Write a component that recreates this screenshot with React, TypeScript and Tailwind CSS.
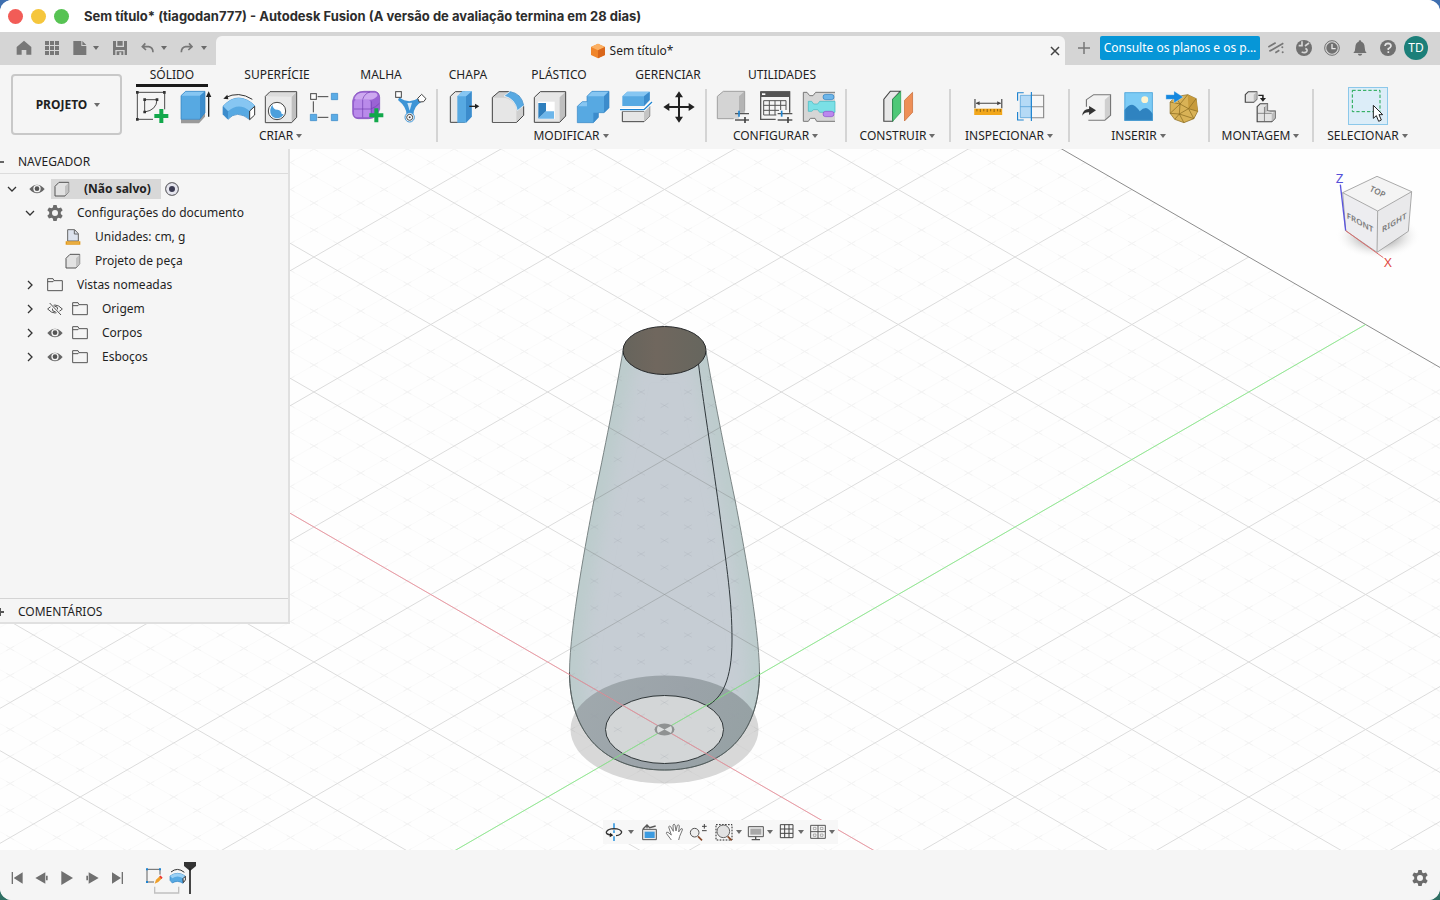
import type { ReactNode } from "react";

type IconProps = { box: string; size?: string; fill?: boolean; children: ReactNode };

function Icon({ box, size = "size-9", fill = false, children }: IconProps) {
  return (
    <svg
      viewBox={box}
      preserveAspectRatio={fill ? "none" : undefined}
      className={`${size} block shrink-0`}
      fill="none"
      aria-hidden="true"
    >
      {children}
    </svg>
  );
}

function Caret({ className = "" }: { className?: string }) {
  return (
    <svg viewBox="0 0 8 6" className={`h-1.5 w-2 shrink-0 ${className}`} aria-hidden="true">
      <path d="M1 1h6L4 5z" fill="#6b6b6b" />
    </svg>
  );
}

const plus = (x: number, y: number) => (
  <path d={`M${x - 6} ${y - 21}h12v15h15v12h-15v15h-12v-15h-15v-12h15z`} fill="#12a84b" />
);

const createTools: [string, ReactNode][] = [
  ["Criar esboço", (
    <Icon box="405 267 108 108">
      <path d="M415 277H497V328M415 277V358H462" stroke="#4a4a4a" strokeWidth="3" />
      <path d="M437 299H474M437 299V336M474 299Q473 330 437 336" stroke="#4a4a4a" strokeWidth="3" />
      <path d="M411 273h8v8h-8zM492 273h8v8h-8zM411 354h8v8h-8zM433 295h8v8h-8zM470 295h8v8h-8zM433 332h8v8h-8z" fill="#333" />
      {plus(487, 348)}
    </Icon>
  )],
  ["Extrusão", (
    <Icon box="531 267 108 108">
      <path d="M543 358h54l18-22v14l-18 20h-54z" fill="#9a9a9a" />
      <path d="M543 287l14-13h58v64l-16 20h-56z" fill="#57a9e2" />
      <path d="M543 287l14-13h58l-15 13z" fill="#86c6f2" />
      <path d="M600 287l15-13v64l-15 20z" fill="#3c8ccc" />
      <path d="M543 287l14-13h58v64l-16 20h-56z" stroke="#2f7fbd" strokeWidth="2" />
      <path d="M626 286V350" stroke="#222" strokeWidth="4" />
      <path d="M618 291l8-17 8 17z" fill="#222" />
    </Icon>
  )],
  ["Revolução", (
    <Icon box="660 267 108 108">
      <path d="M676 293Q716 272 757 298" stroke="#333" strokeWidth="3" />
      <path d="M670 296l12-12 3 14z" fill="#222" />
      <path d="M669 319Q692 294 716 294Q743 295 765 318L749 334V359Q732 344 713 343Q696 344 684 358L669 343Z" fill="#57a9e2" stroke="#3585c4" strokeWidth="2" />
      <path d="M669 319Q692 294 716 294Q743 295 765 318L749 333Q716 306 684 334Z" fill="#86c6f2" />
      <path d="M669 319L684 334V358L669 343Z" fill="#3c8ccc" />
      <path d="M749 333L764 319V345L749 359Z" fill="#fff" stroke="#333" strokeWidth="3" />
    </Icon>
  )],
  ["Furo", (
    <Icon box="792 267 108 108">
      <path d="M799 289L813 275H893V352L878 368H799Z" fill="#e9e9e9" />
      <path d="M878 290L893 275V352L878 368Z" fill="#bfbfbf" />
      <path d="M799 289L813 275H893L878 290Z" fill="#dcdcdc" />
      <path d="M799 289L813 275H893V352L878 368H799Z" stroke="#4a4a4a" strokeWidth="3" />
      <circle cx="834" cy="333" r="26" fill="#fff" stroke="#444" strokeWidth="3" />
      <path d="M820 314Q823 330 836 329Q846 330 848 342L854 343A22 22 0 0 1 818 347Q808 330 820 314Z" fill="#4b9fdc" />
    </Icon>
  )],
  ["Padrão retangular", (
    <Icon box="915 267 108 108">
      <path d="M950 290H982M937 304V337M950 352H982" stroke="#444" strokeWidth="3" />
      <rect x="929" y="281" width="17" height="17" fill="#fff" stroke="#444" strokeWidth="3" />
      <path d="M991 280h19v19h-19zM928 343h19v19h-19zM991 343h19v19h-19z" fill="#5aace6" stroke="#3585c4" strokeWidth="2" />
    </Icon>
  )],
  ["Criar forma", (
    <Icon box="1047 267 108 108">
      <path d="M1058 302Q1060 288 1070 280Q1078 274 1092 274H1124Q1138 276 1139 292V328Q1130 356 1106 356H1074Q1058 354 1058 338Z" fill="#9a63d4" stroke="#7a45b5" strokeWidth="2" />
      <path d="M1064 294Q1070 278 1090 278H1124Q1134 279 1132 288Q1122 300 1108 299H1068Q1062 298 1064 294Z" fill="#cda9f0" />
      <rect x="1062" y="299" width="50" height="52" rx="10" fill="#b98aea" />
      <path d="M1088 299V352M1062 327H1112Q1128 322 1138 310M1088 298Q1094 280 1110 276M1114 304V348" stroke="#6f3db0" strokeWidth="2" />
      {plus(1129, 346)}
    </Icon>
  )],
  ["Modelagem automatizada", (
    <Icon box="1176 267 108 108">
      <path d="M1198 292Q1226 314 1256 294L1264 306Q1241 318 1240 346L1220 346Q1221 322 1194 300Z" fill="#3c94d6" />
      <path d="M1222 309l14-1-7 24z" fill="#cfe6f7" />
      <rect x="1187" y="275" width="17" height="17" fill="#fff" stroke="#444" strokeWidth="3" />
      <path d="M1265 283l13 13-7 9-13 1-5-11z" fill="#fff" stroke="#444" strokeWidth="3" />
      <circle cx="1229" cy="352" r="14" fill="#fff" stroke="#3c94d6" strokeWidth="3" />
      <circle cx="1229" cy="352" r="9" stroke="#444" strokeWidth="3" />
      <circle cx="1229" cy="352" r="3" fill="#444" />
    </Icon>
  )],
];

const modifyTools: [string, ReactNode][] = [
  ["Pressionar/puxar", (
    <Icon box="48 87 108 108">
      <path d="M61 109L76 95H104V187H61Z" fill="#e8e8e8" stroke="#444" strokeWidth="3" />
      <path d="M82 109L97 94H125V170L108 188H82Z" fill="#57a9e2" />
      <path d="M108 109L125 94V170L108 188Z" fill="#3c8ccc" />
      <path d="M82 109L97 94H125L108 109Z" fill="#86c6f2" />
      <path d="M118 139H138" stroke="#222" strokeWidth="4" />
      <path d="M135 131l13 8-13 8z" fill="#222" />
    </Icon>
  )],
  ["Arredondamento", (
    <Icon box="177 87 108 108">
      <path d="M187 112L207 95H236Q272 104 281 140V166L260 187H187Z" fill="#cfcfcf" stroke="#444" strokeWidth="3" />
      <path d="M189 113H224Q256 120 259 152V186H189Z" fill="#e6e6e6" />
      <path d="M222 108L240 94Q274 100 282 136L262 152Q256 116 222 108Z" fill="#57a9e2" stroke="#fff" strokeWidth="2" />
      <path d="M240 95Q274 100 281 136" stroke="#2f7fbd" strokeWidth="2" />
    </Icon>
  )],
  ["Casca", (
    <Icon box="309 87 108 108">
      <path d="M316 112L334 95H410V168L392 187H316Z" fill="#e6e6e6" />
      <path d="M392 112L410 95V168L392 187Z" fill="#bfbfbf" />
      <path d="M316 112L334 95H410V168L392 187H316Z" stroke="#444" strokeWidth="3" />
      <rect x="327" y="125" width="50" height="52" fill="#fff" />
      <path d="M328 129H351V154L328 176Z" fill="#2f7fbd" />
      <path d="M328 176L351 154H375V176Z" fill="#6db6ea" />
    </Icon>
  )],
  ["Combinar", (
    <Icon box="438 87 108 108">
      <path d="M445 139L460 125H474V109L489 94H540V143L525 158H508V172L493 188H445Z" fill="#57a9e2" />
      <path d="M445 139L460 125H474V139ZM474 109L489 94H540L525 109Z" fill="#86c6f2" />
      <path d="M525 109L540 94V143L525 158ZM493 158H508V172L493 188Z" fill="#3c8ccc" />
      <path d="M445 139L460 125H474V109L489 94H540V143L525 158H508V172L493 188H445Z" stroke="#3585c4" strokeWidth="2" />
    </Icon>
  )],
  ["Dividir corpo", (
    <Icon box="567 87 108 108">
      <path d="M580 154H645L662 138V168L645 185H580Z" fill="#e6e6e6" stroke="#444" strokeWidth="3" />
      <path d="M645 154L662 138V168L645 185Z" fill="#c4c4c4" />
      <path d="M573 149H645L669 126" stroke="#fff" strokeWidth="10" />
      <path d="M580 109L595 95H662V120L645 138H580Z" fill="#57a9e2" />
      <path d="M580 109L595 95H662L645 109Z" fill="#86c6f2" />
      <path d="M645 109L662 95V120L645 138Z" fill="#3c8ccc" />
      <path d="M573 149H645L669 126" stroke="#1d83d0" strokeWidth="4" />
    </Icon>
  )],
  ["Mover/copiar", (
    <Icon box="696 87 108 108">
      <path d="M750 106V178M714 141H786" stroke="#222" strokeWidth="6" />
      <path d="M750 94l12 18h-24zM750 188l12-18h-24zM703 141l18-12v24zM797 141l-18-12v24z" fill="#222" />
    </Icon>
  )],
];

const configTools: [string, ReactNode][] = [
  ["Parâmetros", (
    <Icon box="858 87 108 108">
      <path d="M865 109L883 94H947V158H930V176H865Z" fill="#d4d4d4" />
      <path d="M930 109L947 94V158H930Z" fill="#b4b4b4" />
      <path d="M865 176V109L883 94H947V152M865 176H914" stroke="#a0a0a0" strokeWidth="3" />
      <path d="M918 161H960M918 180H960" stroke="#555" strokeWidth="4" />
      <path d="M930 152V170" stroke="#1d83d0" strokeWidth="5" />
      <path d="M948 171V189" stroke="#444" strokeWidth="5" />
    </Icon>
  )],
  ["Tabela de configuração", (
    <Icon box="987 87 108 108">
      <path d="M995 96H1082V158M995 96V178H1040" stroke="#555" strokeWidth="4" />
      <path d="M993 94h90v17h-90z" fill="#555" />
      <path d="M999 100h10v5h-10z" fill="#fff" />
      <path d="M1004 122H1071V150M1004 122V165H1042M1004 136H1071M1004 151H1050M1021 122V165M1038 122V165M1055 122V150" stroke="#555" strokeWidth="3" />
      <path d="M1046 161H1090M1046 180H1090" stroke="#555" strokeWidth="4" />
      <path d="M1058 152V170" stroke="#1d83d0" strokeWidth="5" />
      <path d="M1077 171V189" stroke="#444" strokeWidth="5" />
    </Icon>
  )],
  ["Configurar tema", (
    <Icon box="1116 87 108 108">
      <path d="M1123 97H1134L1142 107H1152L1160 97H1218V184H1163L1158 175H1144L1138 184H1123Z" fill="#d6d6d6" />
      <path d="M1218 97H1160L1152 107H1142L1134 97H1123V184H1138L1144 175H1158L1163 184H1218" stroke="#777" strokeWidth="3" />
      <path d="M1138 124H1148L1154 132H1166L1172 124H1218V157H1172L1166 149H1154L1148 154H1138Z" fill="#7be0e6" stroke="#3fb6bf" strokeWidth="2" />
      <rect x="1182" y="103" width="33" height="16" rx="8" fill="#6db6ea" stroke="#2f7fbd" strokeWidth="2" />
      <rect x="1182" y="154" width="33" height="16" rx="8" fill="#bb88ee" stroke="#8a52c8" strokeWidth="2" />
    </Icon>
  )],
];

const buildTools: [string, ReactNode][] = [
  ["Plano de deslocamento", (
    <Icon box="107 177 94 108" fill>
      <path d="M117 208L134 184H160L140 208V274H117Z" fill="#e8e8e8" stroke="#444" strokeWidth="3" />
      <path d="M140 208L161 185V247L140 274Z" fill="#4fc878" stroke="#259a4e" strokeWidth="2" />
      <path d="M171 211L192 187V247L171 273Z" fill="#ee8f57" stroke="#c76a35" strokeWidth="2" />
    </Icon>
  )],
];

const inspectTools: [string, ReactNode][] = [
  ["Medir", (
    <Icon box="342 177 94 108" fill>
      <path d="M355 207V235M425 207V235M358 220H422" stroke="#444" strokeWidth="3" />
      <path d="M357 220l10-6v12zM423 220l-10-6v12z" fill="#444" />
      <path d="M353 236h73v19h-73z" fill="#f2a71b" />
      <path d="M360 237v7M369 237v9M378 237v7M387 237v9M396 237v7M405 237v9M414 237v7M421 237v9" stroke="#6b4a10" strokeWidth="2" />
    </Icon>
  )],
  ["Análise de seção", (
    <Icon box="455 177 94 108" fill>
      <path d="M474 196h29v67h-29z" fill="#b5daf6" />
      <path d="M474 196h29v67h-29zM474 230h29" stroke="#4a9bd8" strokeWidth="2" />
      <path d="M503 196h32v67h-32M503 230h32M535 196V263" fill="#f7f7f7" stroke="#8a8a8a" strokeWidth="3" />
      <path d="M503 186V273M483 188H467V212M467 246V270H483" stroke="#1d83d0" strokeWidth="3" />
    </Icon>
  )],
];

const insertTools: [string, ReactNode][] = [
  ["Inserir derivado", (
    <Icon box="625 177 94 108" fill>
      <path d="M647 209L666 194H710V256L695 271H647Z" fill="#f2f2f2" />
      <path d="M695 209L710 194V256L695 271Z" fill="#cfcfcf" />
      <path d="M647 230V209L666 194H710V256L695 271H652" stroke="#777" strokeWidth="3" />
      <path d="M636 257Q638 236 654 237V228L672 241L654 255V247Q642 246 636 257Z" fill="#333" />
    </Icon>
  )],
  ["Tela de desenho", (
    <Icon box="737 177 94 108" fill>
      <path d="M746 187h74v85h-74z" fill="#7ccbf5" />
      <path d="M746 240Q756 224 766 224Q774 224 786 244Q794 234 802 234Q810 236 820 252V272H746Z" fill="#2f83c0" />
      <ellipse cx="799" cy="209" rx="9" ry="10" fill="#fff4cf" />
      <path d="M747 188h72v83h-72z" stroke="#4a9ed4" strokeWidth="2" />
    </Icon>
  )],
  ["Inserir malha", (
    <Icon box="850 177 94 108" fill>
      <path d="M866 216L880 200L912 194L934 206L938 244L928 266L902 278L878 268L866 250Z" fill="#d9b256" stroke="#8a6a20" strokeWidth="2" />
      <path d="M912 194L934 206L938 244L914 236Z" fill="#c79b3c" />
      <path d="M866 216L892 222L912 194M892 222L914 236L934 206M866 250L892 222L890 252L866 250M890 252L914 236L928 266M890 252L902 278M878 268L890 252L928 266M914 236L938 244M892 222L880 200" stroke="#8a6a20" strokeWidth="2" />
      <path d="M855 194H876V183L900 201L876 219V208H855Z" fill="#1588e0" stroke="#f4f4f4" strokeWidth="1" />
    </Icon>
  )],
];

const assemblyTools: [string, ReactNode][] = [
  ["Montar", (
    <Icon box="1056 177 94 108" fill>
      <path d="M1062 194L1070 185H1092V208L1084 217H1062Z" fill="#e4e4e4" stroke="#444" strokeWidth="3" />
      <path d="M1084 194L1092 185V208L1084 217Z" fill="#bbb" />
      <path d="M1096 196H1108V206" stroke="#222" strokeWidth="4" />
      <path d="M1100 204h16l-8 11z" fill="#222" />
      <path d="M1093 230L1101 221H1120V242L1128 243H1140V264L1131 275H1093Z" fill="#e4e4e4" stroke="#444" strokeWidth="3" />
      <path d="M1112 231L1120 221V242L1112 250ZM1131 252L1140 243V264L1131 275Z" fill="#bbb" />
      <path d="M1093 250H1131M1112 231V275" stroke="#666" strokeWidth="2" />
    </Icon>
  )],
];

function Group({ label, tools, width }: { label: string; tools: [string, ReactNode][]; width: string }) {
  return (
    <section className={`${width} flex shrink-0 flex-col items-center border-l-2 border-[#d4d4d4] first:border-transparent`}>
      <div className="flex h-9">
        {tools.map(([name, icon]) => (
          <button key={name} type="button" aria-label={name} className="flex w-[43px] justify-center">
            {icon}
          </button>
        ))}
      </div>
      <button type="button" className="flex items-center gap-0.5 text-xs leading-[22px]">
        {label}
        <Caret />
      </button>
    </section>
  );
}

const tabs: [string, string][] = [
  ["SÓLIDO", "w-[92px]"],
  ["SUPERFÍCIE", "w-[118px]"],
  ["MALHA", "w-[90px]"],
  ["CHAPA", "w-[84px]"],
  ["PLÁSTICO", "w-[98px]"],
  ["GERENCIAR", "w-[120px]"],
  ["UTILIDADES", "w-[108px]"],
];

function TitleBar() {
  return (
    <header className="flex h-8 items-center bg-white pl-2">
      <div className="flex gap-2">
        <button type="button" aria-label="Fechar" className="size-[15px] rounded-full bg-[#f25c57]" />
        <button type="button" aria-label="Minimizar" className="size-[15px] rounded-full bg-[#f5c63c]" />
        <button type="button" aria-label="Ampliar" className="size-[15px] rounded-full bg-[#57c353]" />
      </div>
      <h1 className="ml-[15px] pt-px font-['Inter',sans-serif] text-[13px] font-bold text-[#2d2d2d]">
        Sem título* (tiagodan777) - Autodesk Fusion (A versão de avaliação termina em 28 dias)
      </h1>
    </header>
  );
}

function TabBar() {
  return (
    <div className="flex h-[33px] bg-[#d5d5d5]">
      <div className="flex w-[216px] shrink-0 items-center pb-px pl-4">
        <button type="button" aria-label="Início">
          <Icon box="48 120 48 48" size="size-4">
            <path d="M72 122L94 141V164H79V150H65V164H50V141Z" fill="#777" />
          </Icon>
        </button>
        <button type="button" aria-label="Painel de dados" className="ml-3">
          <Icon box="132 120 48 48" size="size-4">
            <path d="M135 123h12v12h-12zM150 123h12v12h-12zM165 123h12v12h-12zM135 138h12v12h-12zM150 138h12v12h-12zM165 138h12v12h-12zM135 153h12v12h-12zM150 153h12v12h-12zM165 153h12v12h-12z" fill="#777" />
          </Icon>
        </button>
        <button type="button" aria-label="Arquivo" className="ml-3 flex items-center gap-1">
          <Icon box="218 120 48 48" size="size-4">
            <path d="M222 123H246V138H261V165H222ZM249 123L261 135H249Z" fill="#777" />
          </Icon>
          <Caret />
        </button>
        <button type="button" aria-label="Salvar" className="ml-3">
          <Icon box="336 120 48 48" size="size-4">
            <path d="M339 123H348V141H372V123H381V165H374V150H346V165H339ZM352 123H368V137H352ZM350 154H370V165H364V157H358V165H350Z" fill="#777" />
          </Icon>
        </button>
        <button type="button" aria-label="Desfazer" className="ml-3 flex items-center gap-1">
          <Icon box="420 120 48 48" size="size-4">
            <path d="M436 130L427 140L438 150M428 140H446Q459 142 459 157" stroke="#777" strokeWidth="5" />
          </Icon>
          <Caret />
        </button>
        <button type="button" aria-label="Refazer" className="ml-3 flex items-center gap-1">
          <Icon box="540 120 48 48" size="size-4">
            <path d="M567 130L576 140L565 150M575 140H557Q544 142 544 157" stroke="#777" strokeWidth="5" />
          </Icon>
          <Caret />
        </button>
      </div>
      <div className="mt-1 flex grow items-center rounded-t-md bg-[#f5f5f5] pr-0.5">
        <div className="flex grow items-center justify-center gap-1 text-xs">
          <Icon box="0 0 48 48" size="size-4">
            <path d="M24 2L45 12V36L24 46L3 36V12Z" fill="#f0852a" />
            <path d="M24 2L45 12L24 22L3 12Z" fill="#fbb064" />
            <path d="M24 22L45 12V36L24 46Z" fill="#d9661a" />
          </Icon>
          Sem título*
        </div>
        <button type="button" aria-label="Fechar documento">
          <Icon box="0 0 16 16" size="size-4">
            <path d="M4 4l8 8M12 4l-8 8" stroke="#444" strokeWidth="1.5" />
          </Icon>
        </button>
      </div>
      <div className="flex w-[375px] shrink-0 items-center pb-px pl-[11px]">
        <button type="button" aria-label="Novo documento">
          <Icon box="0 0 16 16" size="size-4">
            <path d="M8 2v12M2 8h12" stroke="#777" strokeWidth="1.5" />
          </Icon>
        </button>
        <button type="button" className="ml-2 h-6 w-40 rounded-xs bg-[#0696d7] text-xs text-white">
          Consulte os planos e os p...
        </button>
        <div className="ml-2 flex items-center gap-3">
          <button type="button" aria-label="Extensões">
            <Icon box="24 24 48 48" size="size-4">
              <path d="M25 45L47 32M28 58L70 34M46 62L58 55" stroke="#777" strokeWidth="5" />
              <circle cx="67" cy="46" r="3" fill="#777" />
              <circle cx="68" cy="61" r="3" fill="#777" />
            </Icon>
          </button>
          <button type="button" aria-label="Status">
            <Icon box="107 24 48 48" size="size-4">
              <circle cx="131" cy="48" r="24" fill="#707070" />
              <path d="M125 28V41H115M134 42L146 33M135 50Q143 52 139 59Q134 64 124 60" stroke="#d5d5d5" strokeWidth="5" />
            </Icon>
          </button>
          <button type="button" aria-label="Trabalhos">
            <Icon box="191 24 48 48" size="size-4">
              <circle cx="215" cy="48" r="22" stroke="#707070" strokeWidth="3" />
              <circle cx="215" cy="48" r="17" fill="#707070" />
              <path d="M215 36V50H226" stroke="#e8e8e8" strokeWidth="4" />
            </Icon>
          </button>
          <button type="button" aria-label="Notificações">
            <Icon box="275 24 48 48" size="size-4">
              <path d="M299 25Q303 25 303 29Q313 33 313 46Q313 58 319 63H279Q285 58 285 46Q285 33 295 29Q295 25 299 25ZM292 65H306Q304 71 299 71Q294 71 292 65Z" fill="#707070" />
            </Icon>
          </button>
          <button type="button" aria-label="Ajuda">
            <Icon box="359 24 48 48" size="size-4">
              <circle cx="383" cy="48" r="24" fill="#707070" />
              <path d="M374 42Q375 34 383 34Q392 35 392 42Q391 47 384 50V54M384 58V63" stroke="#e4e4e4" strokeWidth="5" />
            </Icon>
          </button>
          <button type="button" className="-ml-1 size-6 rounded-full bg-[#1c7f79] text-center text-xs leading-6 text-white">
            TD
          </button>
        </div>
      </div>
    </div>
  );
}

function Ribbon() {
  return (
    <div className="flex h-[84px] bg-[#f5f5f5]">
      <button
        type="button"
        className="ml-[11px] mt-[9px] flex h-[61px] w-[111px] shrink-0 items-center justify-center gap-1.5 rounded border-2 border-[#c8c8c8] pl-1 text-xs font-bold"
      >
        PROJETO
        <Caret />
      </button>
      <div className="ml-1 flex min-w-0 grow flex-col">
        <nav className="flex pt-px">
          {tabs.map(([name, width], i) => (
            <a key={name} href="#" className={`${width} flex shrink-0 flex-col items-center text-xs leading-[18px]`}>
              {name}
              {i === 0 && <span className="h-[3px] w-[72px] bg-[#1a1a1a]" />}
            </a>
          ))}
        </nav>
        <div className="mt-0.5 flex h-[53px] pl-1">
          <Group label="CRIAR" tools={createTools} width="mr-1.5 w-[300px]" />
          <Group label="MODIFICAR" tools={modifyTools} width="w-[269px]" />
          <Group label="CONFIGURAR" tools={configTools} width="w-[140px]" />
          <Group label="CONSTRUIR" tools={buildTools} width="w-[104px]" />
          <Group label="INSPECIONAR" tools={inspectTools} width="w-[119px]" />
          <Group label="INSERIR" tools={insertTools} width="w-[140px]" />
          <Group label="MONTAGEM" tools={assemblyTools} width="w-[104px]" />
          <section className="flex w-[110px] shrink-0 flex-col items-center border-l-2 border-[#d4d4d4]">
            <button
              type="button"
              aria-label="Selecionar"
              className="-mt-0.5 flex h-[38px] w-10 items-center justify-center border border-[#8cc8ea] bg-[#dcedf8]"
            >
              <Icon box="270 171 108 108">
                <path d="M277 178H360V242H277Z" stroke="#1ca64c" strokeWidth="3" strokeDasharray="10 6" />
                <path d="M340 223V262L349 254L356 271L364 267L357 251H368Z" fill="#fff" stroke="#222" strokeWidth="3" />
              </Icon>
            </button>
            <button type="button" className="flex items-center gap-0.5 text-xs leading-[22px]">
              SELECIONAR
              <Caret />
            </button>
          </section>
        </div>
      </div>
    </div>
  );
}

const Chevron = ({ open }: { open?: boolean }) => (
  <Icon box="0 0 12 12" size="size-3">
    <path d={open ? "M2 4l4 4 4-4" : "M4 2l4 4-4 4"} stroke="#333" strokeWidth="1.3" />
  </Icon>
);

const Eye = () => (
  <Icon box="0 0 48 48" size="size-4">
    <path d="M1 24Q24 -2 47 24Q24 50 1 24Z" fill="#666" />
    <circle cx="24" cy="23" r="11" fill="#f5f5f5" />
    <circle cx="24" cy="23" r="7" fill="#555" />
  </Icon>
);

const EyeOff = () => (
  <Icon box="0 0 48 48" size="size-4">
    <path d="M2 24Q24 0 46 24Q24 48 2 24Z" stroke="#555" strokeWidth="3" />
    <circle cx="24" cy="24" r="8" stroke="#555" strokeWidth="3" />
    <path d="M6 6L42 42" stroke="#f5f5f5" strokeWidth="9" />
    <path d="M8 6L42 42" stroke="#555" strokeWidth="3" />
  </Icon>
);

const Folder = () => (
  <Icon box="0 0 48 48" size="size-4">
    <path d="M2 41V5H18L21 11H46V41ZM2 14H18L21 11" stroke="#555" strokeWidth="3" />
  </Icon>
);

const Body = () => (
  <Icon box="0 0 48 48" size="size-4">
    <path d="M3 16L15 4H44V32L33 45H3Z" fill="#e2e2e2" stroke="#555" strokeWidth="3" />
    <path d="M33 16L44 5V32L33 44Z" fill="#c2c2c2" />
  </Icon>
);

const Units = () => (
  <Icon box="0 0 48 48" size="size-4">
    <path d="M8 2H29L40 14V36H8Z" fill="#dde3ee" stroke="#666" strokeWidth="3" />
    <path d="M28 3V15H40" stroke="#666" strokeWidth="3" />
    <path d="M2 37h44v10h-44z" fill="#e29a1c" />
    <path d="M6 42h36" stroke="#fbd58a" strokeWidth="2" />
  </Icon>
);

function Gear({ size = "size-4" }: { size?: string }) {
  return (
    <svg viewBox="0 0 24 24" className={`${size} shrink-0`} aria-hidden="true">
      <path
        fillRule="evenodd"
        fill="#6c6c6c"
        d="M9.5 0H14.5L15.2 3.6L17.5 4.9L21 3.7L23.5 8L20.7 10.5V13.5L23.5 16L21 20.3L17.5 19.1L15.2 20.4L14.5 24H9.5L8.8 20.4L6.5 19.1L3 20.3L0.5 16L3.3 13.5V10.5L0.5 8L3 3.7L6.5 4.9L8.8 3.6ZM12 7.5A4.5 4.5 0 1 0 12 16.5A4.5 4.5 0 0 0 12 7.5Z"
      />
    </svg>
  );
}

function Row({ indent, open, children }: { indent: string; open?: boolean; children: ReactNode }) {
  return (
    <li className={`${indent} flex h-6 items-center`}>
      {open !== undefined && (
        <button type="button" aria-label={open ? "Recolher" : "Expandir"}>
          <Chevron open={open} />
        </button>
      )}
      {children}
    </li>
  );
}

function Browser() {
  return (
    <aside className="relative flex h-[475px] w-[290px] flex-col border-r-2 border-b-2 border-[#e0e0e0] bg-[#f5f5f5] text-xs">
      <div className="flex h-[25px] shrink-0 items-center border-b border-[#dcdcdc] pt-0.5">
        <span className="h-0.5 w-1 bg-[#666]" />
        <h2 className="ml-3.5">NAVEGADOR</h2>
      </div>
      <ul className="grow pt-[3px]">
        <Row indent="pl-1.5" open>
          <span className="ml-[11px]"><Eye /></span>
          <span className="ml-1.5 flex h-5 items-center bg-[#d8d8d8] pr-2.5 pl-[3px] font-bold">
            <Body />
            <span className="ml-3.5">(Não salvo)</span>
          </span>
          <input
            type="radio"
            defaultChecked
            aria-label="Ativar componente"
            className="ml-1 size-3.5 appearance-none rounded-full border border-[#777] bg-[#3b3b52] ring-[3px] ring-[#e6e6ee] ring-inset"
          />
        </Row>
        <Row indent="pl-6" open>
          <span className="ml-[11px]"><Gear /></span>
          <span className="ml-3.5">Configurações do documento</span>
        </Row>
        <Row indent="pl-[65px]">
          <Units />
          <span className="ml-3.5">Unidades: cm, g</span>
        </Row>
        <Row indent="pl-[65px]">
          <Body />
          <span className="ml-3.5">Projeto de peça</span>
        </Row>
        <Row indent="pl-6" open={false}>
          <span className="ml-[11px]"><Folder /></span>
          <span className="ml-3.5">Vistas nomeadas</span>
        </Row>
        <Row indent="pl-6" open={false}>
          <span className="ml-[11px]"><EyeOff /></span>
          <span className="ml-[9px]"><Folder /></span>
          <span className="ml-3.5">Origem</span>
        </Row>
        <Row indent="pl-6" open={false}>
          <span className="ml-[11px]"><Eye /></span>
          <span className="ml-[9px]"><Folder /></span>
          <span className="ml-3.5">Corpos</span>
        </Row>
        <Row indent="pl-6" open={false}>
          <span className="ml-[11px]"><Eye /></span>
          <span className="ml-[9px]"><Folder /></span>
          <span className="ml-3.5">Esboços</span>
        </Row>
      </ul>
      <div className="flex h-6 shrink-0 items-center border-t border-[#d4d4d4] pt-0.5">
        <svg viewBox="0 0 4 8" className="h-2 w-1" aria-hidden="true">
          <path d="M0 4h4M0 0v8" stroke="#555" strokeWidth="2" />
        </svg>
        <h2 className="ml-3.5">COMENTÁRIOS</h2>
      </div>
    </aside>
  );
}

const originX = 664.5;
const originY = 729.5;
const stepX = 116.85;
const stepY = 67.5;
const minorLength = Math.hypot(stepX, stepY) / 5;
const at = (u: number, v: number) => `${originX + (u + v) * stepX} ${originY + (u - v) * stepY}`;
const range = (from: number, to: number) => Array.from({ length: to - from + 1 }, (_, i) => from + i);

const major = [
  ...range(-9, 5).map((v) => `M${at(-14, v)}L${at(14, v)}`),
  ...range(-12, 12).map((u) => `M${at(u, -10)}L${at(u, 6)}`),
].join("");

const minor = [
  ...range(-45, 29).filter((v) => v % 5 !== 0).map((v) => `M${at(-14, v / 5)}L${at(14, v / 5)}`),
  ...range(-60, 60).filter((u) => u % 5 !== 0).map((u) => `M${at(u / 5, -10)}L${at(u / 5, 6)}`),
].join("");

const bottle =
  "M623 351C616 392 604 452 594 500C587 536 570 625 569.5 672C569.5 735 606 770 664.5 770C723 770 759.5 735 759.5 672C759 625 742 536 735 500C725 452 713 392 706 351Z";

function Scene() {
  return (
    <svg
      viewBox="0 149 1440 701"
      preserveAspectRatio="xMidYMid slice"
      className="absolute inset-0 size-full"
      fill="none"
      role="img"
      aria-label="Modelo 3D"
    >
      <defs>
        <linearGradient id="base" x1="575" x2="754" y1="690" y2="765" gradientUnits="userSpaceOnUse">
          <stop offset="0" stopColor="#a0a9ad" />
          <stop offset="0.5" stopColor="#9ba3a9" />
          <stop offset="1" stopColor="#95a1a3" />
        </linearGradient>
        <linearGradient id="mouth" x1="623" x2="706" y1="0" y2="0" gradientUnits="userSpaceOnUse">
          <stop offset="0" stopColor="#66645c" />
          <stop offset="0.4" stopColor="#70675e" />
          <stop offset="1" stopColor="#66665e" />
        </linearGradient>
        <filter id="soft" x="-20%" y="-20%" width="140%" height="140%">
          <feGaussianBlur stdDeviation="8" />
        </filter>
        <clipPath id="bottleClip">
          <path d={bottle} />
        </clipPath>
      </defs>
      <path d="M0 149H1440V850H0Z" fill="#fefefe" />
      <path d={minor} stroke="#fafafa" strokeWidth="1" />
      <path
        d={minor}
        stroke="#f3f3f3"
        strokeWidth="1"
        strokeDasharray={`9 ${minorLength - 9}`}
        strokeDashoffset="4.5"
      />
      <path d={major} stroke="#dcdcdc" strokeWidth="1" />
      <path d={`M${at(-14, 6)}L${at(14, 6)}`} stroke="#8c8c8c" strokeWidth="1" />
      <ellipse cx="664.5" cy="729.5" rx="94" ry="54" fill="#000" fillOpacity="0.15" />
      <g clipPath="url(#bottleClip)">
        <path d={bottle} fill="#c6cdd4" />
        <path d={bottle} stroke="#bccccc" strokeWidth="26" filter="url(#soft)" />
        <ellipse cx="664.5" cy="729.5" rx="94" ry="54" fill="url(#base)" />
        <ellipse cx="664.5" cy="729.5" rx="59" ry="34" fill="#d3d6d7" stroke="#2f3638" strokeWidth="1" />
        <path d={major} stroke="#8d9494" strokeOpacity="0.5" strokeWidth="1" />
        <path
          d={minor}
          stroke="#9aa2a8"
          strokeOpacity="0.2"
          strokeWidth="1"
          strokeDasharray={`9 ${minorLength - 9}`}
          strokeDashoffset="4.5"
        />
      </g>
      <path d={bottle} stroke="#7c8686" strokeWidth="1" />
      <path d="M569.5 672C569.5 735 606 770 664.5 770C723 770 759.5 735 759.5 672" stroke="#535d5d" strokeWidth="1" />
      <path d={`M${at(-14, 0)}L${at(14, 0)}`} stroke="#f08a96" strokeWidth="1" strokeOpacity="0.8" />
      <path d={`M${at(0, -10)}L${at(0, 6)}`} stroke="#80f080" strokeWidth="1" strokeOpacity="0.8" />
      <path d="M698.5 364C703 400 711 450 719 508C727 570 732 600 732 640C732 680 722 698 707 706" stroke="#30383c" strokeWidth="1" />
      <ellipse cx="664.5" cy="350.5" rx="41.5" ry="24" fill="url(#mouth)" stroke="#26282a" strokeWidth="1" />
      <ellipse cx="664.5" cy="729.5" rx="10" ry="6" fill="#8f9292" />
      <path d="M664.5 729.5L658 726Q656 729.5 658 733ZM664.5 729.5L671 726Q673 729.5 671 733Z" fill="#dcdfdf" />
    </svg>
  );
}

function ViewCube() {
  return (
    <svg viewBox="0 0 420 390" className="relative h-[130px] w-[140px] translate-y-px" aria-label="Cubo de visualização" role="img">
      <defs>
        <radialGradient id="cubeShade">
          <stop offset="0.4" stopColor="#bcbcbc" />
          <stop offset="1" stopColor="#fefefe" stopOpacity="0" />
        </radialGradient>
      </defs>
      <ellipse cx="234" cy="258" rx="128" ry="68" fill="url(#cubeShade)" />
      <path d="M128 128L231 79L335 125L233 183Z" fill="#f4f4f4" />
      <path d="M128 128L233 183L231 307L137 242Z" fill="#ededf0" />
      <path d="M233 183L335 125L325 244L231 307Z" fill="#e9e9eb" />
      <path d="M128 128L231 79L335 125L233 183ZM128 128L137 242L231 307L325 244L335 125M233 183L231 307" fill="none" stroke="#9a9a9a" strokeWidth="2.5" />
      <path d="M121 104L137 242" stroke="#5a55dd" strokeWidth="4" />
      <path d="M137 242L250 323" stroke="#dd6a6a" strokeWidth="3" />
      <g fontFamily="Noto Sans, sans-serif" fill="#7c7c7c" textAnchor="middle" fontWeight="600">
        <text x="119" y="98" fontSize="40" fill="#5550d8" fontWeight="400">Z</text>
        <text x="264" y="350" fontSize="40" fill="#e04a44" fontWeight="400">X</text>
        <text transform="translate(229 133) rotate(27)" fontSize="25">TOP</text>
        <text transform="translate(180 226) skewY(29)" fontSize="24">FRONT</text>
        <text transform="translate(283 226) skewY(-31)" fontSize="24">RIGHT</text>
      </g>
    </svg>
  );
}

function NavTools() {
  return (
    <div className="relative flex h-6 items-center gap-2 bg-[#f7f7f7] px-0.5">
      <div className="flex items-center gap-1.5">
        <button type="button" aria-label="Órbita" className="flex items-center gap-1">
          <Icon box="39 36 54 54" size="size-[18px]">
            <path d="M66 37V52M66 58V66M66 76V90" stroke="#3c9be0" strokeWidth="5" />
            <path d="M56 72Q42 70 43 63Q48 53 66 53Q86 54 89 63Q88 72 72 74" stroke="#333" strokeWidth="4" />
            <path d="M54 65l10 8-11 6z" fill="#222" />
          </Icon>
          <Caret />
        </button>
        <button type="button" aria-label="Olhar para">
          <Icon box="144 36 54 54" size="size-[18px]">
            <path d="M149 55H190V86H149Z" fill="#e8e8e8" stroke="#555" strokeWidth="3" />
            <path d="M155 62h30v19h-30z" fill="#3c9be0" />
            <path d="M150 54L162 42L170 50L188 45M162 42V52" stroke="#555" strokeWidth="4" />
          </Icon>
        </button>
        <button type="button" aria-label="Panorâmica">
          <Icon box="219 36 54 54" size="size-[18px]">
            <path d="M238 87L223 67Q222 62 228 64L238 72L230 48Q232 42 236 47L244 61L243 42Q247 37 249 42L252 60L256 43Q261 39 262 45L260 63L267 53Q273 52 271 57L263 76L260 87" fill="#fff" stroke="#777" strokeWidth="3" />
          </Icon>
        </button>
        <button type="button" aria-label="Zoom">
          <Icon box="298 36 54 54" size="size-[18px]">
            <circle cx="315" cy="65" r="13" fill="#eee" stroke="#555" strokeWidth="3" />
            <path d="M325 76L337 88" stroke="#8a4a2a" strokeWidth="5" />
            <path d="M337 46H351M344 39V53M337 59H351" stroke="#444" strokeWidth="3" />
          </Icon>
        </button>
      </div>
      <div className="flex items-center gap-1">
        <button type="button" aria-label="Ajustar" className="flex items-center gap-0.5">
          <Icon box="376 36 54 54" size="size-[18px]">
            <path d="M379 41H427V87H379Z" stroke="#222" strokeWidth="3" strokeDasharray="5 4" />
            <circle cx="401" cy="61" r="19" fill="#e2e2e2" stroke="#666" strokeWidth="3" />
            <path d="M414 76L426 88" stroke="#8a4a2a" strokeWidth="5" />
          </Icon>
          <Caret />
        </button>
        <button type="button" aria-label="Configurações de exibição" className="flex items-center gap-px">
          <Icon box="477 36 54 54" size="size-[18px]">
            <path d="M481 47H526V77H481Z" fill="#eee" stroke="#555" strokeWidth="3" />
            <path d="M487 53h33v18h-33z" fill="#a8a8a8" />
            <path d="M503 77V85M491 86H516" stroke="#555" strokeWidth="4" />
          </Icon>
          <Caret />
        </button>
        <button type="button" aria-label="Grade e encaixes" className="flex items-center gap-px">
          <Icon box="568 36 54 54" size="size-[18px]">
            <path d="M575 41H613V80H575ZM588 41V80M601 41V80M575 54H613M575 67H613" stroke="#444" strokeWidth="3" />
          </Icon>
          <Caret />
        </button>
        <button type="button" aria-label="Viewports" className="flex items-center gap-px">
          <Icon box="663 36 54 54" size="size-[18px]">
            <path d="M668 43H712V82H668ZM690 43V82M668 62H712" stroke="#555" strokeWidth="3" />
            <path d="M676 49h8v7h-8zM697 49h8v7h-8zM676 69h8v7h-8zM697 69h8v7h-8z" stroke="#888" strokeWidth="2" />
          </Icon>
          <Caret />
        </button>
      </div>
    </div>
  );
}

const playback: [string, string][] = [
  ["Ir para o início", "M8 6h4v36H8zM41 7v34L14 24z"],
  ["Voltar", "M4 24L34 7v34zM36 17h5v14h-5z"],
  ["Reproduzir", "M7 3L42 24L7 45z"],
  ["Avançar", "M44 24L14 7v34zM7 17h5v14H7z"],
  ["Ir para o fim", "M38 6h4v36h-4zM9 7v34L36 24z"],
];

function Timeline() {
  return (
    <footer className="flex h-[50px] items-center bg-[#f5f5f5] pr-3 pl-[9px]">
      <div className="flex items-center gap-[9px] pt-1.5">
        {playback.map(([name, d]) => (
          <button key={name} type="button" aria-label={name}>
            <Icon box="0 0 48 48" size="size-4">
              <path d={d} fill="#707070" />
            </Icon>
          </button>
        ))}
      </div>
      <div className="ml-[19px] grow pt-1.5">
        <svg viewBox="432 60 168 108" className="h-9 w-14" fill="none" aria-hidden="true">
          <path d="M464 140V159H536V140" stroke="#c0c0c0" strokeWidth="4" />
          <path d="M441 88H480V104M441 88V126H462" stroke="#444" strokeWidth="2.5" />
          <path d="M438 85h6v6h-6zM477 85h6v6h-6zM438 123h6v6h-6z" fill="#1d83d0" />
          <path d="M464 131L468 119L480 108L486 115L475 126Z" fill="#f0a02a" />
          <path d="M480 108L486 115" stroke="#e33" strokeWidth="5" />
          <path d="M513 96Q532 80 553 97" stroke="#333" strokeWidth="3" />
          <path d="M510 108Q532 92 556 108L549 116V130Q532 119 517 129L510 121Z" fill="#57a9e2" stroke="#3585c4" strokeWidth="2" />
          <path d="M510 108Q532 92 556 108L549 115Q532 104 517 115Z" fill="#9ad0f4" />
          <path d="M549 116L556 109V120L550 128Z" fill="#fff" stroke="#333" strokeWidth="3" />
          <path d="M552 66H588V78L570 93L552 78Z" fill="#333" />
          <path d="M570 85V162" stroke="#222" strokeWidth="5" />
        </svg>
      </div>
      <button type="button" aria-label="Configurações" className="mt-1.5">
        <Gear />
      </button>
    </footer>
  );
}

export default function App() {
  return (
    <div className="h-screen bg-linear-to-b from-[#3f6fb0] to-[#2f6f63]">
      <div className="flex h-full flex-col overflow-hidden rounded-xl bg-white font-['Noto_Sans',sans-serif] text-[#1f1f1f]">
        <TitleBar />
        <TabBar />
        <Ribbon />
        <main className="relative flex grow flex-col overflow-hidden">
          <Scene />
          <div className="flex grow items-start justify-between">
            <Browser />
            <ViewCube />
          </div>
          <div className="flex justify-center pb-1.5">
            <NavTools />
          </div>
        </main>
        <Timeline />
      </div>
    </div>
  );
}
